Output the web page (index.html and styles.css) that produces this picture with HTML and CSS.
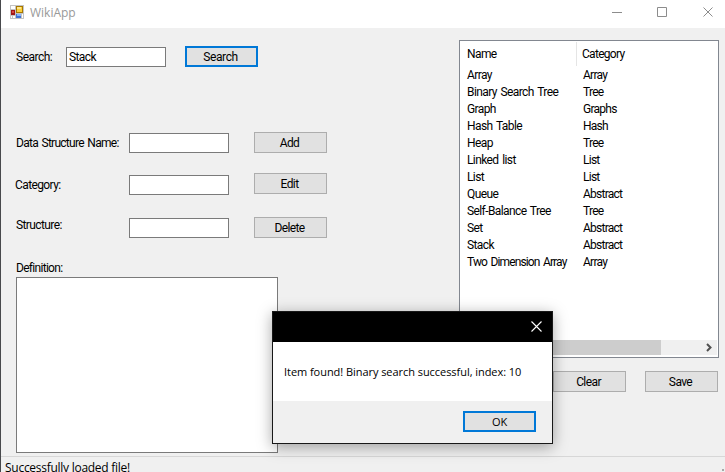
FILE: index.html
```html
<!DOCTYPE html>
<html lang="en">
<head>
<meta charset="utf-8">
<title>WikiApp</title>
<link rel="stylesheet" href="styles.css">
</head>
<body>
<div class="window">
  <header class="titlebar">
    <svg class="app-icon" width="14" height="14" viewBox="0 0 14 14" shape-rendering="crispEdges">
      <path fill="#c4c4c4" d="M0 0h14v14H0z"/>
      <path fill="#fff" d="M1 1h4v3H1zM1 11h1v2H1zM3 11h2v2H3zM12 9h1v4h-1z"/>
      <path fill="#a01818" d="M1 5h4v5H1z"/>
      <path fill="#d84840" d="M2 6h2v2H2z"/>
      <path fill="#a87800" d="M6 1h7v7H6z"/>
      <path fill="#fbd03c" d="M7 2h5v5H7z"/>
      <path fill="#ffe78c" d="M7 2h4v2H7z"/>
      <path fill="#3f72d4" d="M6 9h5v4H6z"/>
      <path fill="#88b4f8" d="M7 9h4v2H7z"/>
    </svg>
    <span class="app-name">WikiApp</span>
    <svg class="controls" width="120" height="28" viewBox="0 0 120 28" fill="none" stroke="#8c8c8c">
      <path d="M7 12.500h10M52.500 7.500h9v9h-9zM98.500 7.500l9 9M107.500 7.500l-9 9"/>
    </svg>
  </header>
  <main class="client">
    <section class="form">
      <div class="row search"><span class="label">Search:</span><div class="input">Stack</div><div class="button focused">Search</div></div>
      <div class="row name"><span class="label">Data Structure Name:</span><div class="input"></div><div class="button">Add</div></div>
      <div class="row category"><span class="label">Category:</span><div class="input"></div><div class="button">Edit</div></div>
      <div class="row structure"><span class="label">Structure:</span><div class="input"></div><div class="button">Delete</div></div>
      <span class="definition-label">Definition:</span>
      <div class="definition"></div>
    </section>
    <section class="records">
      <div class="list">
        <div class="list-head"><span>Name</span><span>Category</span></div>
        <div class="list-body">
          <span>Array</span><span>Array</span>
          <span>Binary Search Tree</span><span>Tree</span>
          <span>Graph</span><span>Graphs</span>
          <span>Hash Table</span><span>Hash</span>
          <span>Heap</span><span>Tree</span>
          <span>Linked list</span><span>List</span>
          <span>List</span><span>List</span>
          <span>Queue</span><span>Abstract</span>
          <span>Self-Balance Tree</span><span>Tree</span>
          <span>Set</span><span>Abstract</span>
          <span>Stack</span><span>Abstract</span>
          <span class="tight">Two Dimension Array</span><span>Array</span>
        </div>
        <div class="scrollbar"><div class="thumb"></div><svg width="17" height="15" viewBox="0 0 17 15" fill="none" stroke="#505050" stroke-width="2"><path d="M7 4l3.500 3.500L7 11"/></svg></div>
      </div>
      <div class="actions"><div class="button">Clear</div><div class="button">Save</div></div>
    </section>
  </main>
  <footer class="status">Successfully loaded file!<i class="grip"></i></footer>
</div>
<div class="dialog">
  <div class="dialog-title"><svg width="11" height="11" viewBox="0 0 11 11" stroke="#fff" stroke-width="1.100"><path d="M.5.5l10 10M10.500.5l-10 10"/></svg></div>
  <div class="dialog-message">Item found! Binary search successful, index: 10</div>
  <div class="dialog-footer"><div class="button focused">OK</div></div>
</div>
</body>
</html>
```

FILE: styles.css
```css
* { box-sizing: border-box; }
body {
  margin: 0;
  width: 725px;
  height: 472px;
  overflow: hidden;
  background: #f0f0f0;
  color: #000;
  font: 12px/16px Roboto, "Liberation Sans", sans-serif;
  letter-spacing: -0.6px;
  word-spacing: 1.3px;
  white-space: nowrap;
}
.window {
  display: flex;
  flex-direction: column;
  height: 472px;
  border-left: 1px solid #48494c;
}
.titlebar {
  display: flex;
  height: 28px;
  padding-left: 9px;
  background: #fff;
}
.app-icon { margin-top: 5px; }
.app-name {
  margin: 5px auto 0 6px;
  color: #999;
  font: 12px/16px "Open Sans", sans-serif;
  letter-spacing: 0;
}
.client { display: flex; height: 428px; }
.form { width: 458px; padding: 18px 0 0 15px; }
.row { display: flex; height: 21px; align-items: flex-start; }
.label { width: 113px; padding-top: 3px; }
.search .label { width: 50px; letter-spacing: -0.5px; }
.name .label { letter-spacing: -0.73px; }
.input {
  width: 100px;
  height: 20px;
  padding: 1px 2px;
  border: 1px solid #7a7a7a;
  background: #fff;
}
.search .input { margin-top: 1px; }
.button {
  width: 73px;
  height: 21px;
  padding-right: 2px;
  border: 1px solid #adadad;
  background: #e1e1e1;
  line-height: 21px;
  text-align: center;
}
.focused { border: 2px solid #0078d7; line-height: 18px; }
.row .button { margin-left: 25px; }
.search .button { margin-left: 19px; letter-spacing: -0.4px; }
.name { margin-top: 65px; }
.name .input { margin-top: 1px; }
.category { margin-top: 20px; }
.category .input { margin-top: 2px; }
.category .label { padding-top: 4px; margin-left: -1px; width: 114px; }
.structure { margin-top: 23px; }
.structure .input { margin-top: 1px; }
.structure .label { padding-top: 0; }
.definition-label { display: block; margin-top: 22px; height: 17px; letter-spacing: -0.7px; }
.definition {
  width: 262px;
  height: 176px;
  border: 1px solid #7a7a7a;
  background: #fff;
}
.records { width: 260px; padding-top: 12px; }
.list {
  display: flex;
  flex-direction: column;
  height: 318px;
  padding: 1px;
  border: 1px solid #828790;
  background: #fff;
}
.list-head {
  display: grid;
  grid-template-columns: 116px 1fr;
  height: 24px;
  line-height: 24px;
}
.list-head span { padding-left: 6px; }
.list-head span:first-child { border-right: 1px solid #e5e5e5; }
.list-head span:last-child { padding-left: 5px; letter-spacing: -0.7px; }
.list-body {
  display: grid;
  grid-template-columns: 116px 1fr;
  grid-auto-rows: 17px;
  padding: 1px 0 0 6px;
  line-height: 17px;
}
.list-body span:nth-child(even) { letter-spacing: -0.75px; }
.list-body .tight { letter-spacing: -0.87px; }
.scrollbar {
  display: flex;
  justify-content: space-between;
  height: 15px;
  margin: auto 0 1px;
  background: #f0f0f0;
}
.thumb { width: 183px; margin-left: 17px; background: #cdcdcd; }
.actions { display: flex; justify-content: flex-end; gap: 19px; padding: 13px 1px 0 0; }
.status {
  display: flex;
  justify-content: space-between;
  height: 16px;
  padding: 3px 0 0 4px;
  border-top: 1px solid #d7d7d7;
  font: 12px/16px "Open Sans", sans-serif;
  letter-spacing: -0.27px;
  word-spacing: 0;
}
.grip { width: 2px; height: 2px; margin: 9px 1px 0 0; background: #a8a8a8; }
.dialog {
  position: absolute;
  left: 272px;
  top: 311px;
  width: 281px;
  height: 133px;
  border: 1px solid #181818;
  background: #fff;
  box-shadow: 0 3px 14px rgba(0, 0, 0, .35);
  font: 11px/16px "Open Sans", sans-serif;
  letter-spacing: -0.05px;
  word-spacing: 0;
}
.dialog-title { display: flex; justify-content: flex-end; height: 30px; padding: 9px 10px 0 0; background: #000; }
.dialog-message { height: 59px; padding: 22px 0 0 11px; }
.dialog-footer { display: flex; justify-content: flex-end; height: 42px; padding: 10px 16px 0 0; background: #f0f0f0; }
.dialog-footer .button { padding-right: 0; }
```
